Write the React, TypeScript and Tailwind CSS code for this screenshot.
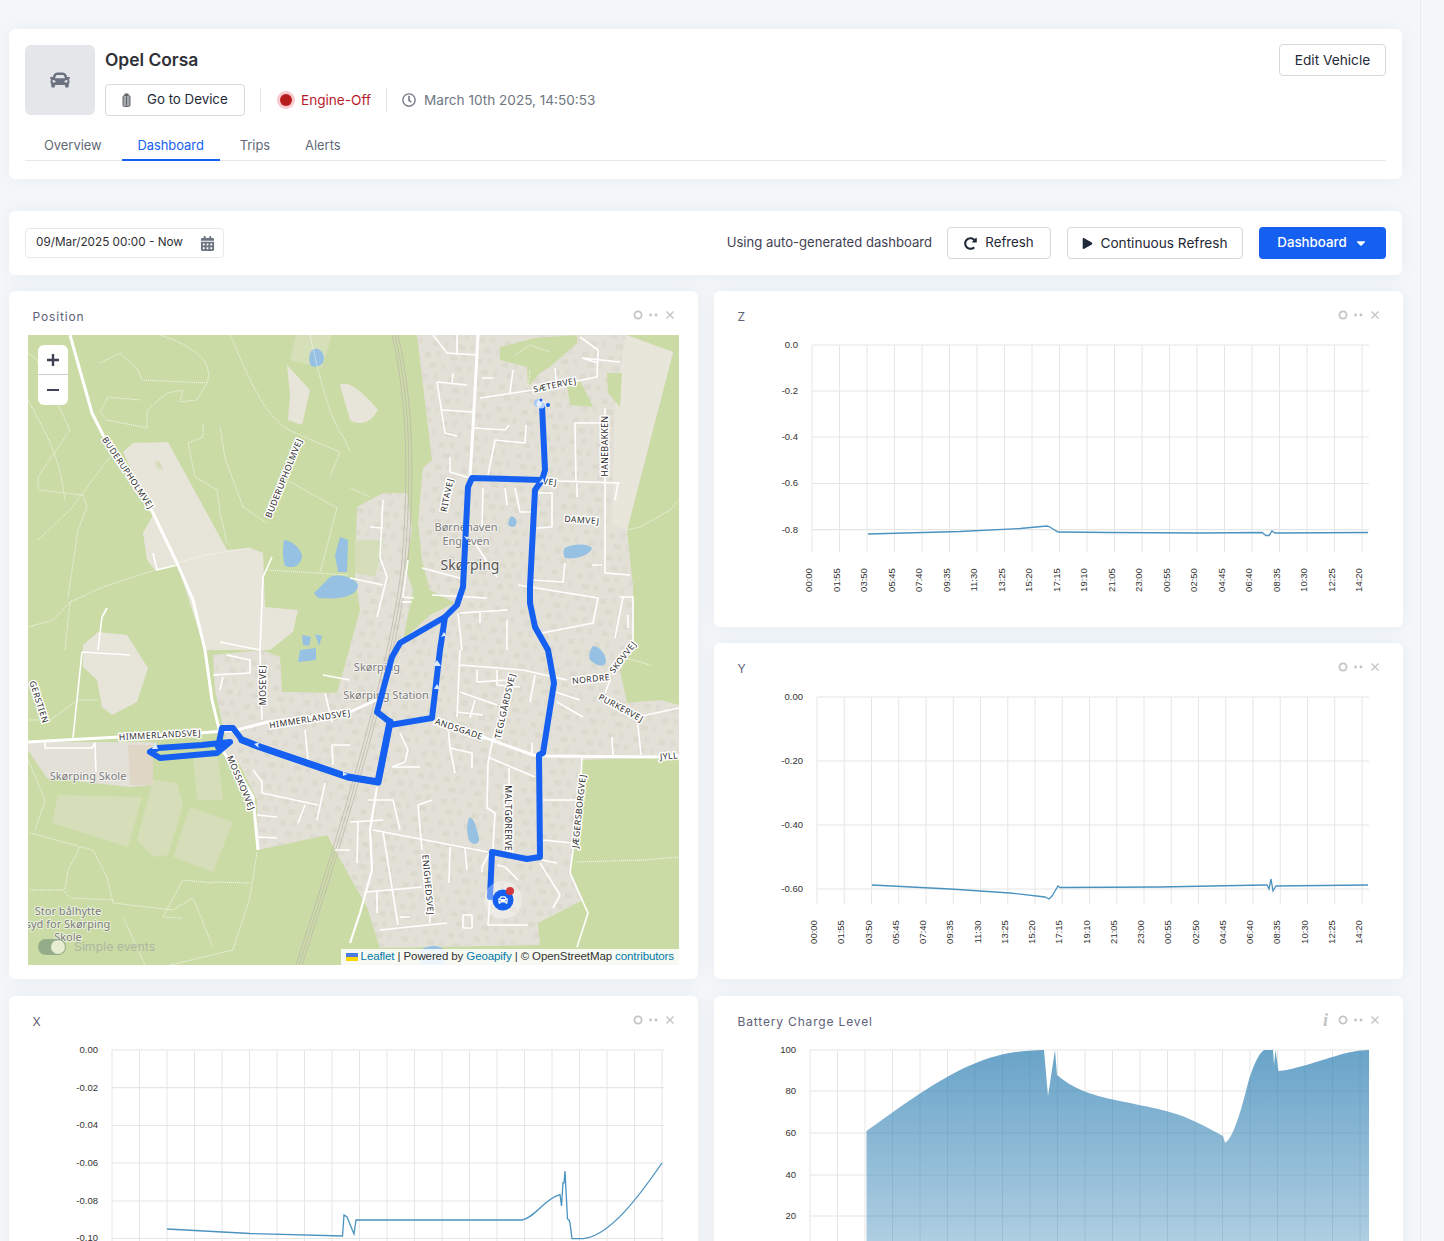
import { FaCar, FaRegClock, FaRedoAlt, FaPlay, FaCaretDown, FaCalendarAlt } from "react-icons/fa"

const TIMES = ["00:00","01:55","03:50","05:45","07:40","09:35","11:30","13:25","15:20","17:15","19:10","21:05","23:00","00:55","02:50","04:45","06:40","08:35","10:30","12:25","14:20"]

function CardTools({ info }: { info?: boolean }) {
  return (
    <div className="flex items-center gap-[5px] text-[#c4c4c4]">
      {info && <span className="mr-[5px] font-['Liberation_Serif',serif] text-[18px] font-bold italic leading-none">i</span>}
      <svg width="10" height="10" viewBox="0 0 10 10"><circle cx="5" cy="5" r="3.6" fill="none" stroke="currentColor" strokeWidth="1.8" /></svg>
      <svg width="11" height="10" viewBox="0 0 11 10"><circle cx="2.5" cy="5" r="1.4" fill="currentColor" /><circle cx="8" cy="5" r="1.4" fill="currentColor" /></svg>
      <svg width="10" height="10" viewBox="0 0 10 10" className="ml-[1px]"><path d="M1.5 1.5l7 7M8.5 1.5l-7 7" stroke="currentColor" strokeWidth="1.4" /></svg>
    </div>
  )
}

function Card({ title, info, tracking, children, className }: { title: string; info?: boolean; tracking?: boolean; children: React.ReactNode; className?: string }) {
  return (
    <div className={`rounded-md bg-white shadow-[0_0_20px_0_rgba(76,87,125,0.08)] ${className ?? ""}`}>
      <div className="flex h-[44px] items-center justify-between pl-[23px] pr-[23px] pt-[7px]">
        <span className={`pl-[0.5px] text-[12px] text-[#5e6278] ${tracking ? "tracking-[0.07em]" : ""}`}>{title}</span>
        <div className="-mt-[3px]"><CardTools info={info} /></div>
      </div>
      {children}
    </div>
  )
}

type ChartProps = {
  originX: number
  originY: number
  height: number
  plotLeft: number
  plotRight: number
  step: number
  top: number
  bottom: number
  labelY?: number
  yTicks: [string, number][]
  children?: React.ReactNode
}

// svg uses page coordinates, easier to read values off the screenshot
function Chart({ originX, originY, height, plotLeft, plotRight, step, top, bottom, labelY, yTicks, children }: ChartProps) {
  return (
    <svg width="689" height={height} viewBox={`${originX} ${originY} 689 ${height}`} className="block font-['Liberation_Sans',sans-serif]">
      {yTicks.map(([label, y]) => (
        <g key={label}>
          <line x1={plotLeft} x2={plotRight} y1={y} y2={y} stroke="#e6e6e6" strokeWidth="1.2" />
          <text x={plotLeft - 14} y={y + 2.8} textAnchor="end" fontSize="9.5" fill="#333">{label}</text>
        </g>
      ))}
      {TIMES.map((t, i) => {
        const x = plotLeft + step * i
        return (
          <g key={i}>
            <line x1={x} x2={x} y1={top} y2={bottom} stroke="#e6e6e6" strokeWidth="1" />
            {labelY && (
              <text x={x - 3} y={labelY} textAnchor="middle" fontSize="9.5" fill="#333" transform={`rotate(-90 ${x - 3} ${labelY})`} dy="3">{t}</text>
            )}
          </g>
        )
      })}
      {children}
    </svg>
  )
}

const LABEL = { fontFamily: "'Noto Sans', sans-serif", paintOrder: "stroke" as const, stroke: "#fff", strokeLinejoin: "round" as const }

function RoadLabel({ x, y, r, t }: { x: number; y: number; r: number; t: string }) {
  return (
    <text x={x} y={y} dy="3" textAnchor="middle" fontSize="8.6" letterSpacing="0.5" fill="#2b2b2b" strokeWidth="3" transform={`rotate(${r} ${x} ${y})`} style={LABEL}>{t}</text>
  )
}

function PlaceLabel({ x, y, t, size = 11 }: { x: number; y: number; t: string; size?: number }) {
  return (
    <text x={x} y={y} dy="4" textAnchor="middle" fontSize={size} fill={size > 12 ? "#555" : "#7c7c7c"} strokeWidth="2" style={{ ...LABEL, stroke: "rgba(255,255,255,0.6)" }}>{t}</text>
  )
}

const MAIN_ROADS = [
  "M478 335L473 427L470 478",
  "M70 335L92 413L103 435L153 513L177 563L193 600L205 650L212 700L220 733",
  "M28 742L120 737L200 733L237 730L267 722L348 713L376 700",
  "M433 722L483 737L533 755L547 756L658 757L679 755",
  "M220 747L240 775L253 797L258 850",
]

const STREETS = [
  "M433 335L447 353L478 355M457 335V355",
  "M437 382L467 385M453 373L452 383M437 382L445 433L457 436M442 410L473 412",
  "M480 398L533 390L597 377L598 350L580 337",
  "M482 378H493M513 370L510 393M555 368L556 380M582 358L620 362M582 358L598 363",
  "M475 428L505 430L509 425M526 425L525 443L495 440L488 475",
  "M450 457V472L470 478",
  "M575 423H600M575 423L576 482M605 408V573L630 575",
  "M470 478L620 483M577 483V497M618 483L615 500",
  "M483 488L482 527M505 488L507 505M515 488L520 512H532M538 493H552V527L537 528",
  "M473 540L497 577M533 580L563 582L565 563M592 565H602",
  "M518 585L598 598L593 623L542 633",
  "M432 595L487 598M422 568L460 578",
  "M383 500L380 557L387 577L377 617M370 527L383 528M350 578L383 585",
  "M408 560L403 597L414 598M402 602H412",
  "M460 613L508 610M507 620V650M480 613V623M458 613L462 650",
  "M620 597H633V650M615 638L623 597M628 615V628",
  "M460 650L457 717M460 665L523 670L567 680",
  "M477 670V682L507 680M497 670V685L520 687M535 675L530 702",
  "M460 692L497 705M555 692L580 700M557 702L583 717M457 712L483 715M475 700L470 718",
  "M510 690L493 738L488 763L487 808L495 813L493 850",
  "M490 758L535 777M509 768V787",
  "M532 743V755M612 737L613 755M637 717L641 755M637 717L679 708M610 680L605 693",
  "M543 800H580M543 840L572 843M542 860L557 863",
  "M582 758L580 800L573 850L570 873L588 913L577 947",
  "M540 863L560 895L553 908",
  "M518 880L505 867L497 865M490 852L482 867V872",
  "M490 897L488 925H528M463 915H472V928H463Z",
  "M373 830L488 852M350 822L383 820M358 822L357 863M383 832L398 925",
  "M418 805L432 800M418 805L422 850M450 847L449 883M465 848L467 870",
  "M367 892L422 887M377 913V892M430 907V923M380 930L447 923M400 917H410",
  "M368 800H393L400 830M392 767H420M392 767L405 762L408 750L400 733",
  "M450 748L472 753V768M448 727L450 748L455 773",
  "M227 655L250 660V673L213 675M223 677L220 690M260 650L262 720",
  "M323 675L350 680M325 693L332 722M332 745H350M332 745L333 765M305 730L308 760",
  "M253 770L262 782V793L318 805M305 805L298 823M325 783L317 820M257 815L277 817M258 837L277 838M335 850H350",
  "M82 652L73 738M82 652L130 655M45 743V748H92L95 743L96 772",
  "M153 553L157 570L177 565M272 557L263 577L260 650M107 608L102 617L98 650M220 642L260 650",
]

const THIN_MAIN = "M377 787L370 830L372 870L360 913L350 943"

const PATHS = [
  "M28 353L37 360L70 430L38 477L38 490L83 495L87 507L78 530L68 597",
  "M100 363L120 353L138 370L142 380L207 383L197 400L180 402L183 390L167 393L147 410L147 428L107 420L100 412L108 397L140 400",
  "M203 425V437L188 443L195 477L217 490L220 513L227 543",
  "M220 427L225 458L243 507L267 523",
  "M295 433L340 452L330 477",
  "M287 480L337 508L320 573",
  "M267 570L348 575",
  "M28 627L53 620L70 602L103 587L155 570L205 555L250 548",
  "M70 602L65 650",
  "M30 833L93 850L107 877L113 903L173 910L193 898L213 947",
  "M80 847L68 870L65 890M30 890H63L70 898L113 900M123 917L145 965",
  "M213 883L183 880L163 917L182 918M250 883L213 882M257 853L250 897L233 950L170 965",
  "M577 862L643 860L679 857M622 657L650 665M627 530L640 527L670 510L679 500",
  "M350 488L370 497M230 335C250 380 265 420 295 433",
  "M160 335C190 345 215 360 207 383M310 335C320 380 330 420 345 440L350 452",
  "M28 400C50 440 60 460 65 500M115 450L70 510L38 540",
  "M28 720H50L78 700L98 700",
  "M28 760L45 800L35 830",
  "M515 355L530 345L550 352M528 387L530 370",
]

const WEST_ROUTE = "M150 752L160 758L217 753L230 742L202 745L158 748L150 752M218 747L222 728H233L242 740L260 747L348 777L378 782L390 722L377 712L392 657L400 643L445 617L457 605L463 587L468 487L472 478L542 480L545 470L542 405"
const EAST_ROUTE = "M542 480L535 490L530 587L530 603L535 627L548 650L554 683L543 753L539 755L540 857L527 859L492 852L490 897"
const MID_ROUTE = "M445 617L440 650L432 718L390 725"

function MapArt() {
  return (
    <svg width="651" height="630" viewBox="28 335 651 630" className="block">
      <defs>
        <pattern id="bld" width="26" height="22" patternUnits="userSpaceOnUse" patternTransform="rotate(8)">
          <rect x="2" y="3" width="6" height="5" fill="#dcd9ce" />
          <rect x="13" y="1" width="5" height="6" fill="#dedbd1" />
          <rect x="8" y="13" width="7" height="5" fill="#dcd9ce" />
          <rect x="20" y="12" width="4" height="6" fill="#dedbd1" />
        </pattern>
        <path id="town" d="M417 335L626 335L673 352L627 530L633 587L633 650L620 670L627 703L660 700L679 705L679 757L582 760L573 850L570 870L583 900L538 923L540 945L380 948L367 907L350 877L327 835L258 850L257 800L240 765L222 752L225 735L215 690L213 655L262 650L280 657L282 692L337 693L345 665L395 660L403 640L430 615L455 603L430 590L422 560L418 523L423 468L432 460Z" />
        <path id="block" d="M357 507L383 493L407 493L412 530L405 568L413 590L403 640L395 660L345 665L360 610L355 575Z" />
      </defs>
      <rect x="28" y="335" width="651" height="630" fill="#cbdba6" />
      <use href="#town" fill="#e3e0d7" />
      <use href="#town" fill="url(#bld)" />
      <use href="#block" fill="#e3e0d7" />
      <use href="#block" fill="url(#bld)" />

      <path d="M626 335L673 352L627 530L612 525L615 400Z" fill="#e8e5da" />
      <path d="M500 347L535 338L577 335V343L550 367L540 373L528 387L527 367L500 360Z" fill="#cbdba6" />
      <path d="M607 373H622L620 407L608 393Z" fill="#cbdba6" />
      <path d="M567 385L580 380L593 407L570 405Z" fill="#cbdba6" />
      <path d="M355 540H383L381 555L375 577L355 573Z" fill="#d5deb9" />
      <path d="M296 335H332L322 368L290 360Z" fill="#d6e0b8" />
      <path d="M340 385C350 378 370 400 378 410C370 425 358 425 350 420Z" fill="#e7e4d9" />
      <path d="M287 365L310 390L302 425L288 420L290 395Z" fill="#e7e4d9" />
      <path d="M123 452L133 443L168 442L227 550L250 548L263 553L265 607L298 610L293 632L270 650L205 650L177 563L155 570L147 560L143 533L153 515Z" fill="#e7e4d9" />
      <path d="M155 460L160 462L163 470L157 468Z" fill="#d5deb9" />
      <path d="M83 645L98 632L127 635L148 668L137 702L112 715L102 707L97 680L83 667Z" fill="#e7e4d9" />
      <path d="M28 742H153V785L130 787L47 778L28 750Z" fill="#e3e0d7" />
      <path d="M128 745H153V785H130Z" fill="#dfd6c5" />
      <path d="M58 795L142 797L128 847L52 823Z" fill="#d5deb9" />
      <path d="M153 780L177 783L183 805L168 855L153 857L137 840Z" fill="#d5deb9" />
      <path d="M190 807L233 822L213 872L173 857Z" fill="#d5deb9" />
      <path d="M193 753L218 757L223 800L197 800Z" fill="#d5deb9" />

      <g fill="#96c1e2">
        <path d="M312 350C318 346 324 352 324 358C324 366 316 368 311 366C308 360 309 354 312 350Z" />
        <path d="M284 540C292 540 302 550 302 557C300 568 290 568 285 566C282 556 283 548 284 540Z" />
        <path d="M340 537L348 540L347 572L338 572L335 555Z" />
        <path d="M330 577C340 573 355 578 358 585C358 596 340 600 318 598L314 593C320 587 325 582 330 577Z" />
        <path d="M302 635L311 637L309 646L303 645ZM315 634L322 636L319 646ZM300 650L316 648L316 660L298 662Z" />
        <path d="M565 548C575 543 588 544 592 548C590 555 575 560 565 558C563 554 563 550 565 548Z" />
        <path d="M510 517C514 515 518 520 516 525C514 528 510 527 508 525Z" />
        <path d="M593 646C600 646 606 655 606 662C604 668 596 666 590 660C588 655 590 650 593 646Z" />
        <path d="M469 818C473 816 476 825 479 838C480 845 472 846 469 840C466 832 467 824 469 818Z" />
        <path d="M420 950C430 944 442 945 445 952L445 965H420Z" />
      </g>

      <g fill="none" stroke="#bdb9ad" strokeWidth="0.8">
        <path d="M392 335C405 390 410 460 402 560C395 650 340 830 296 965" />
        <path d="M395 335C408 390 413 460 405 560C398 650 343 830 299 965" />
        <path d="M398 335C411 390 416 460 408 560C401 650 346 830 302 965" />
      </g>
      <g fill="none" stroke="#fff" strokeWidth="1" strokeDasharray="1 1" opacity="0.85">
        {PATHS.map((d, i) => <path key={i} d={d} />)}
      </g>
      <g fill="none" stroke="#fff" strokeWidth="1.6" strokeLinejoin="round">
        {STREETS.map((d, i) => <path key={i} d={d} />)}
        <path d={THIN_MAIN} strokeWidth="2.2" />
      </g>
      <g fill="none" stroke="#fff" strokeWidth="3" strokeLinejoin="round">
        {MAIN_ROADS.map((d, i) => <path key={i} d={d} />)}
      </g>

      <RoadLabel x={128} y={473} r={56} t="BUDERUPHOLMVEJ" />
      <RoadLabel x={284} y={478} r={-68} t="BUDERUPHOLMVEJ" />
      <RoadLabel x={555} y={385} r={-12} t="SÆTERVEJ" />
      <RoadLabel x={605} y={446} r={-90} t="HANEBAKKEN" />
      <RoadLabel x={447} y={495} r={-78} t="RITAVEJ" />
      <RoadLabel x={550} y={482} r={5} t="VEJ" />
      <RoadLabel x={582} y={520} r={4} t="DAMVEJ" />
      <RoadLabel x={591} y={679} r={-6} t="NORDRE" />
      <RoadLabel x={623} y={657} r={-52} t="SKOVVEJ" />
      <RoadLabel x={621} y={708} r={28} t="PURKERVEJ" />
      <RoadLabel x={669} y={756} r={-5} t="JYLL" />
      <RoadLabel x={505} y={706} r={-77} t="TEGLGÅRDSVEJ" />
      <RoadLabel x={459} y={729} r={19} t="ANDSGADE" />
      <RoadLabel x={160} y={735} r={-3} t="HIMMERLANDSVEJ" />
      <RoadLabel x={310} y={719} r={-9} t="HIMMERLANDSVEJ" />
      <RoadLabel x={263} y={685} r={-90} t="MOSEVEJ" />
      <RoadLabel x={241} y={783} r={67} t="MOSSKOVVEJ" />
      <RoadLabel x={39} y={702} r={72} t="GERSTIEN" />
      <RoadLabel x={508} y={820} r={90} t="MALTGØRERVEJ" />
      <RoadLabel x={579} y={811} r={-84} t="JÆGERSBORGVEJ" />
      <RoadLabel x={428} y={885} r={85} t="ENIGHEDSVEJ" />
      <PlaceLabel x={466} y={527} t="Børnehaven" />
      <PlaceLabel x={466} y={541} t="Engleven" />
      <PlaceLabel x={470} y={566} t="Skørping" size={14} />
      <PlaceLabel x={377} y={667} t="Skørping" />
      <PlaceLabel x={386} y={695} t="Skørping Station" />
      <PlaceLabel x={88} y={776} t="Skørping Skole" />
      <PlaceLabel x={68} y={911} t="Stor bålhytte" />
      <PlaceLabel x={68} y={924} t="syd for Skørping" />
      <PlaceLabel x={68} y={937} t="Skole" />

      <g fill="none" stroke="#1560f0" strokeWidth="6" strokeLinejoin="round" strokeLinecap="round">
        <path d={WEST_ROUTE} />
        <path d={EAST_ROUTE} />
        <path d={MID_ROUTE} />
        <path d="M242 740L260 747L348 777L378 782L390 722" strokeWidth="7" />
      </g>
      <g fill="#dbe8fd">
        <path d="M543 478l-4 5 3-1 3 2zM467 540l-3-4 3 1 3-1zM444 632l-3 5 3-1 3 1zM437 660l-4 6h8zM437 684l-3 5h6zM254 744l5 4-1-3 2-3zM343 776l5-2-3-1-2-3z" />
      </g>
      <g>
        <circle cx="538" cy="403" r="4" fill="#a9c7f7" />
        <circle cx="541" cy="404" r="4.5" fill="#fff" opacity="0.7" />
        <circle cx="548" cy="405" r="2" fill="#1560f0" />
        <circle cx="541" cy="400" r="1.5" fill="#1560f0" />
        <path d="M155 741l3 8h-6z" fill="#dbe8fd" />
      </g>
      <circle cx="503" cy="900" r="19" fill="#fff" opacity="0.35" />
      <circle cx="503" cy="900" r="10.5" fill="#1560f0" />
      <FaCar x={498} y={895} size={10} color="#fff" />
      <circle cx="510" cy="891" r="4" fill="#d0393f" />
    </svg>
  )
}

function MapPanel() {
  return (
    <div className="relative mx-[19px] h-[630px] overflow-hidden">
      <MapArt />
      <div className="absolute left-[10px] top-[10px] flex h-[60px] w-[30px] flex-col rounded-md bg-white text-[#3f4254]">
        <div className="flex h-[30px] items-center justify-center border-b border-[#ccc]">
          <svg width="14" height="14" viewBox="0 0 14 14"><path d="M7 1v12M1 7h12" stroke="#3f4254" strokeWidth="2.400" /></svg>
        </div>
        <div className="flex flex-1 items-center justify-center">
          <svg width="14" height="14" viewBox="0 0 14 14"><path d="M1 7h12" stroke="#3f4254" strokeWidth="2" /></svg>
        </div>
      </div>
      <div className="absolute bottom-[9px] left-[10px] flex items-center gap-[8px] opacity-70">
        <div className="flex h-[16px] w-[28px] items-center justify-end rounded-full bg-[#7d9a7c] pr-[1px]">
          <div className="h-[14px] w-[14px] rounded-full bg-[#f2f5e4]" />
        </div>
        <span className="font-['Inter',sans-serif] text-[12.300px] text-[#a0a8a0]">Simple events</span>
      </div>
      <div className="absolute bottom-0 right-0 flex h-[16px] items-center bg-white/85 pl-[5px] pr-[5px] font-['Liberation_Sans',sans-serif] text-[11.500px] tracking-[-0.1px] text-[#333]">
        <svg width="12" height="8" viewBox="0 0 12 8" className="mr-[3px]"><rect width="12" height="4" fill="#4c7be1" /><rect y="4" width="12" height="4" fill="#ffd500" /></svg>
        <span className="text-[#0078a8]">Leaflet</span>
        <span className="whitespace-pre"> | Powered by </span>
        <span className="text-[#0078a8]">Geoapify</span>
        <span className="whitespace-pre"> | © OpenStreetMap </span>
        <span className="text-[#0078a8]">contributors</span>
      </div>
    </div>
  )
}

function ZChart() {
  return (
    <Chart originX={714} originY={335} height={292} plotLeft={812} plotRight={1369} step={27.5} top={345} bottom={552} labelY={580}
      yTicks={[["0.0", 345], ["-0.2", 391], ["-0.4", 437], ["-0.6", 483.500], ["-0.8", 529.700]]}>
      <path d="M868 534L960 531.500L1020 528.500L1047 526L1049 526.500L1058 532L1110 532.500L1200 533L1262 532.500L1266 535.500L1269 535.500L1272 531L1275 533L1368 532.500" fill="none" stroke="#4a93c0" strokeWidth="1.300" />
    </Chart>
  )
}

function YChart() {
  return (
    <Chart originX={714} originY={687} height={292} plotLeft={817} plotRight={1369} step={27.25} top={697} bottom={904} labelY={932}
      yTicks={[["0.00", 697], ["-0.20", 761], ["-0.40", 825], ["-0.60", 889]]}>
      <path d="M872 885L950 889L1010 893L1045 897L1049 899L1052 896L1058 886L1060 887.500L1160 887L1264 885L1267 885L1269 889L1271 879L1273 891L1276 886L1368 885" fill="none" stroke="#4a93c0" strokeWidth="1.300" />
    </Chart>
  )
}

function XChart() {
  return (
    <Chart originX={9} originY={1040} height={292} plotLeft={112} plotRight={664} step={27.5} top={1050} bottom={1290}
      yTicks={[["0.00", 1050], ["-0.02", 1087.700], ["-0.04", 1125.500], ["-0.06", 1163], ["-0.08", 1201], ["-0.10", 1238.500]]}>
      <path d="M167 1229L250 1233.500L342.500 1236L344 1215L347 1217L354 1234L356 1220L522 1220C535 1218 545 1198 560 1194.700L561.500 1206L563 1182.700L564 1183L565 1171L567.500 1219L569 1220L570 1223L572 1238.700L583 1238.700C610 1236 640 1195 662 1163" fill="none" stroke="#4a93c0" strokeWidth="1.300" />
    </Chart>
  )
}

function BatteryChart() {
  return (
    <Chart originX={714} originY={1040} height={292} plotLeft={810} plotRight={1369} step={27.500} top={1050} bottom={1290}
      yTicks={[["100", 1050], ["80", 1091], ["60", 1133], ["40", 1175], ["20", 1216]]}>
      <defs>
        <linearGradient id="batt" x1="0" y1="1050" x2="0" y2="1280" gradientUnits="userSpaceOnUse">
          <stop offset="0" stopColor="#2f80b3" stopOpacity="0.72" />
          <stop offset="1" stopColor="#2f80b3" stopOpacity="0.32" />
        </linearGradient>
      </defs>
      <path d="M866.500 1131L900 1107C930 1086 955 1071 976 1063C995 1055 1015 1050.500 1044 1050L1048 1096L1055 1050L1057 1075C1072 1088 1090 1095 1115 1100C1135 1104 1150 1107 1162 1110C1185 1115 1205 1126 1223 1136L1225 1142.700C1232 1140 1240 1115 1247 1087C1252 1068 1258 1054 1264 1050L1273 1050L1274 1065L1275.500 1050L1278.500 1071C1295 1070 1320 1060 1336 1056C1348 1052 1358 1050.500 1369 1050L1369 1290L866.500 1290Z" fill="url(#batt)" />
    </Chart>
  )
}

export default function App() {
  return (
    <div className="flex h-[1241px] w-[1444px] overflow-hidden bg-[#f5f8fa] font-['Inter',sans-serif]">
      <main className="w-[1421px] shrink-0 border-r border-[#e7ecf1] pl-[9px] pr-[17px] pt-[29px]">
        <div className="mr-[1px] h-[150px] rounded-md bg-white px-[16px] pt-[16px] shadow-[0_0_20px_0_rgba(76,87,125,0.08)]">
          <div className="flex items-start justify-between">
            <div className="flex gap-[10px]">
              <div className="flex h-[70px] w-[70px] items-center justify-center rounded-md bg-[#e4e6ea] text-[#6c7280]">
                <FaCar size={20} />
              </div>
              <div>
                <div className="h-[39px] pt-[3px] text-[17.400px] font-semibold leading-[24px] text-[#2f3136]">Opel Corsa</div>
                <div className="flex items-center">
                  <button className="flex h-[32px] w-[140px] items-center rounded border border-[#d5d7db] pl-[16px] text-[13.300px] text-[#1f2937]">
                    <svg width="9" height="14" viewBox="0 0 9 14" className="mr-[16px]"><rect x="1" y="2.500" width="7" height="11" rx="1.500" fill="#a5a9ae" stroke="#5f6368" /><rect x="2.500" y="0.500" width="4" height="2" fill="#5f6368" /><path d="M4.500 3.500v9" stroke="#5f6368" /></svg>
                    Go to Device
                  </button>
                  <div className="ml-[15px] h-[24px] border-l border-[#e4e6ea]" />
                  <div className="ml-[16px] flex h-[18px] w-[18px] items-center justify-center rounded-full bg-[#f8c9ce]">
                    <div className="h-[12px] w-[12px] rounded-full bg-[#b71c1c]" />
                  </div>
                  <span className="ml-[6px] text-[13.600px] text-[#b71c2c]">Engine-Off</span>
                  <div className="ml-[15px] h-[24px] border-l border-[#e4e6ea]" />
                  <FaRegClock size={14} className="ml-[15px] text-[#6f7782]" />
                  <span className="ml-[8px] text-[13.600px] text-[#6f7782]">March 10th 2025, 14:50:53</span>
                </div>
              </div>
            </div>
            <button className="-mt-[1px] h-[32px] w-[107px] rounded border border-[#d5d7db] text-[13.700px] text-[#1f2937]">Edit Vehicle</button>
          </div>
          <div className="mt-[15px] flex h-[30px] border-b border-[#e6e8ec] text-[12.900px] text-[#626a76]">
            <div className="pl-[19px] pr-[20px] pt-[5px]">Overview</div>
            <div className="h-[30px] w-[98px] border-b-2 border-[#1560f0] pt-[5px] text-center text-[#1560f0]">Dashboard</div>
            <div className="pl-[20px] pt-[5px]">Trips</div>
            <div className="pl-[35px] pt-[5px]">Alerts</div>
          </div>
        </div>

        <div className="mr-[1px] mt-[32px] flex h-[64px] items-center rounded-md bg-white px-[16px] shadow-[0_0_20px_0_rgba(76,87,125,0.08)]">
          <div className="flex h-[30px] w-[199px] items-center justify-between rounded border border-[#e8eaee] pl-[10px] pr-[8px] text-[11.750px] text-[#2f3136]">
            <span>09/Mar/2025 00:00 - Now</span>
            <FaCalendarAlt size={15} className="text-[#6c7280]" />
          </div>
          <span className="ml-auto text-[13.100px] text-[#3f4254]">Using auto-generated dashboard</span>
          <button className="ml-[15px] flex h-[32px] w-[104px] items-center justify-center gap-[8px] rounded border border-[#d5d7db] text-[13.300px] text-[#1f2937]">
            <FaRedoAlt size={13} />
            Refresh
          </button>
          <button className="ml-[16px] flex h-[32px] w-[176px] items-center justify-center gap-[7px] rounded border border-[#d5d7db] text-[13.650px] leading-[20px] text-[#1f2937]">
            <FaPlay size={11} />
            Continuous Refresh
          </button>
          <button className="ml-[16px] flex h-[32px] w-[127px] items-center justify-center gap-[7px] rounded bg-[#1560f0] text-[13.300px] font-medium text-white">
            Dashboard
            <FaCaretDown size={14} />
          </button>
        </div>

        <div className="mt-[16px] grid grid-cols-[689px_689px] gap-[16px]">
          <Card title="Position" tracking className="row-span-2 h-[688px]">
            <MapPanel />
          </Card>
          <Card title="Z" className="h-[336px]"><ZChart /></Card>
          <Card title="Y" className="h-[336px]"><YChart /></Card>
        </div>
        <div className="mt-[17px] grid grid-cols-[689px_689px] gap-[16px]">
          <Card title="X" className="h-[336px]"><XChart /></Card>
          <Card title="Battery Charge Level" tracking info className="h-[336px]"><BatteryChart /></Card>
        </div>
      </main>
    </div>
  )
}
